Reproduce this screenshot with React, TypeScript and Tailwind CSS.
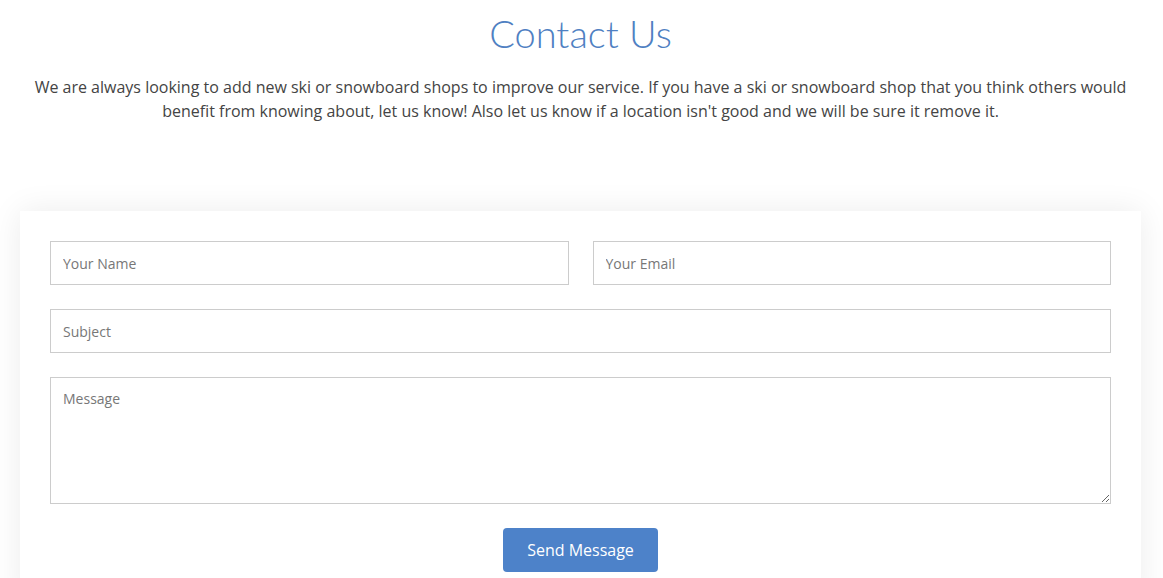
import React from "react";

export default function App() {
  return (
    <div className="min-h-screen bg-white overflow-hidden" style={{ fontFamily: '"Open Sans", sans-serif' }}>
      <div className="pl-[20px] pr-[22px]">
        <h1
          className="text-center text-[38px] leading-[48px] pt-[9px] font-light text-[#4f80c2]"
          style={{ fontFamily: 'Lato, "Open Sans", sans-serif', fontWeight: 300 }}
        >
          Contact Us
        </h1>
        <p className="mt-[18px] text-center text-[16px] leading-[24px] text-[#444444] px-[4px]">
          We are always looking to add new ski or snowboard shops to improve our service. If you have a ski or snowboard shop that you think others would benefit from knowing about, let us know! Also let us know if a location isn't good and we will be sure it remove it.
        </p>
        <div className="mt-[88px] bg-white shadow-[0_0_30px_rgba(0,0,0,0.08)] p-[30px] pb-[30px]">
          <form className="flex flex-col gap-[24px]" onSubmit={(e) => e.preventDefault()}>
            <div className="grid grid-cols-2 gap-[24px]">
              <input
                type="text"
                placeholder="Your Name"
                className="h-[44px] border border-[#cccccc] px-[12px] text-[14px] text-[#444] placeholder:text-[#777] outline-none"
              />
              <input
                type="email"
                placeholder="Your Email"
                className="h-[44px] border border-[#cccccc] px-[12px] text-[14px] text-[#444] placeholder:text-[#777] outline-none"
              />
            </div>
            <input
              type="text"
              placeholder="Subject"
              className="h-[44px] border border-[#cccccc] px-[12px] text-[14px] text-[#444] placeholder:text-[#777] outline-none"
            />
            <textarea
              placeholder="Message"
              className="h-[127px] border border-[#cccccc] px-[12px] py-[10px] text-[14px] leading-[21px] text-[#444] placeholder:text-[#777] outline-none"
            />
            <div className="flex justify-center">
              <button
                type="submit"
                className="h-[44px] w-[155px] rounded-[4px] bg-[#4d82c9] text-white text-[16px]"
              >
                Send Message
              </button>
            </div>
          </form>
        </div>
      </div>
    </div>
  );
}
